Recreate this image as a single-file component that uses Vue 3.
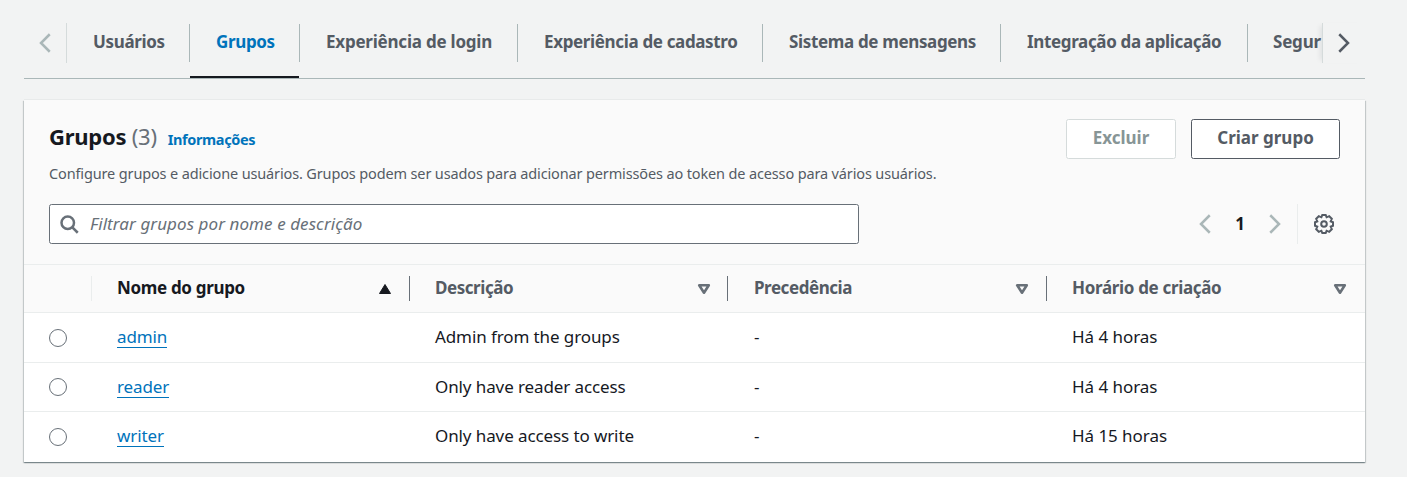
<script setup>
const tabs = [
  { label: 'Usuários', cls: 't1' },
  { label: 'Grupos', cls: 't2 active' },
  { label: 'Experiência de login', cls: 't3' },
  { label: 'Experiência de cadastro', cls: 't4' },
  { label: 'Sistema de mensagens', cls: 't5' },
  { label: 'Integração da aplicação', cls: 't6' },
  { label: 'Segur', cls: 't7' },
]
const columns = ['Nome do grupo', 'Descrição', 'Precedência', 'Horário de criação']
const rows = [
  { name: 'admin', desc: 'Admin from the groups', created: 'Há 4 horas' },
  { name: 'reader', desc: 'Only have reader access', created: 'Há 4 horas' },
  { name: 'writer', desc: 'Only have access to write', created: 'Há 15 horas' },
]
</script>

<template>
  <main class="page">
    <nav class="tabs">
      <button class="scroll left" aria-label="Anterior">
        <svg width="20" height="20" viewBox="0 0 16 16"><path d="M11 1 4 8l7 7" /></svg>
      </button>
      <div class="strip">
        <a v-for="t in tabs" :key="t.label" class="tab" :class="t.cls"><span>{{ t.label }}</span></a>
      </div>
      <button class="scroll right" aria-label="Próximo">
        <svg width="20" height="20" viewBox="0 0 16 16"><path d="m5 1 7 7-7 7" /></svg>
      </button>
    </nav>

    <section class="card">
      <header class="head">
        <div class="title-row">
          <h2>Grupos <span class="count">(3)</span></h2>
          <a class="info">Informações</a>
          <div class="actions">
            <button class="btn disabled">Excluir</button>
            <button class="btn create">Criar grupo</button>
          </div>
        </div>
        <p class="desc">Configure grupos e adicione usuários. Grupos podem ser usados para adicionar permissões ao token de acesso para vários usuários.</p>
        <div class="tools">
          <div class="search">
            <svg width="20" height="20" viewBox="0 0 16 16"><circle cx="7" cy="7" r="5" /><path d="m15 15-4.5-4.5" /></svg>
            <span>Filtrar grupos por nome e descrição</span>
          </div>
          <div class="pager">
            <svg width="20" height="20" viewBox="0 0 16 16"><path d="M11 1 4 8l7 7" /></svg>
            <b>1</b>
            <svg width="20" height="20" viewBox="0 0 16 16"><path d="m5 1 7 7-7 7" /></svg>
          </div>
          <div class="settings">
            <svg width="22" height="22" viewBox="-11 -11 22 22">
              <path d="M-1.7-9H1.7L2.6-6.7 5.2-7.8 7.8-5.2 6.7-2.6 9-1.7V1.7L6.7 2.6 7.8 5.2 5.2 7.8 2.6 6.7 1.7 9H-1.7L-2.6 6.7-5.2 7.8-7.8 5.2-6.7 2.6-9 1.7V-1.7L-6.7-2.6-7.8-5.2-5.2-7.8-2.6-6.7Z" />
              <circle r="2.8" />
            </svg>
          </div>
        </div>
      </header>

      <div class="row thead">
        <div class="pick"></div>
        <div v-for="(c, i) in columns" :key="c" class="cell" :class="['c' + i, { sorted: i === 0 }]">
          <span>{{ c }}</span>
          <svg class="sort" width="14" height="12" viewBox="0 0 14 12">
            <path v-if="i === 0" class="solid" d="M7 1.5 12.5 10.5h-11Z" />
            <path v-else d="M2.2 2.3h9.6L7 9.7Z" />
          </svg>
        </div>
      </div>
      <div v-for="r in rows" :key="r.name" class="row body">
        <div class="pick"><i class="radio"></i></div>
        <div class="cell"><a class="link">{{ r.name }}</a></div>
        <div class="cell">{{ r.desc }}</div>
        <div class="cell">-</div>
        <div class="cell time">{{ r.created }}</div>
      </div>
    </section>
  </main>
</template>

<style>
body { background: #f2f3f3; }
</style>

<style scoped>
* { box-sizing: border-box; }
.page { height: 477px; padding: 23px 42px 0 24px; overflow: hidden; background: #f2f3f3; color: #16191f; font: 17px/25px "Noto Sans", "Open Sans", sans-serif; }
button { font: inherit; background: none; border: 0; padding: 0; }
svg { display: block; flex: none; fill: none; stroke: currentColor; stroke-width: 2; overflow: visible; }
.tabs { display: flex; height: 56px; border-bottom: 1px solid #aab7b8; }
.scroll { flex: none; width: 43px; height: 40px; display: flex; align-items: center; color: #545b64; }
.scroll.left { border-right: 1px solid #d5dbdb; color: #aab7b8; padding-left: 12px; }
.scroll.right { border-left: 1px solid #d5dbdb; padding-left: 10px; box-shadow: -5px 0 5px -3px rgba(0, 28, 36, .08); }
.strip { flex: 1; display: flex; min-width: 0; }
.tab { position: relative; flex: none; height: 55px; padding: 6px 0 0 26px; color: #545b64; font-weight: 700; letter-spacing: -.35px; white-space: nowrap; }
.tab::after { content: ""; position: absolute; right: 0; top: 1px; height: 38px; border-right: 1px solid #aab7b8; }
.tab.active { color: #0073bb; }
.tab.active::before { content: ""; position: absolute; left: 0; right: 1px; bottom: 0; height: 2px; background: #16191f; }
.t1 { width: 123px; } .t2 { width: 110px; } .t3 { width: 218px; letter-spacing: -.22px; } .t4 { width: 245px; } .t5 { width: 238px; } .t6 { width: 247px; }
.t7 { padding-left: 25px; letter-spacing: -.2px; }
.t7::after { display: none; }
.card { margin-top: 21px; height: 362px; background: #fff; box-shadow: 0 1px 1px 0 rgba(0, 28, 36, .3), 1px 1px 1px 0 rgba(0, 28, 36, .15), -1px 1px 1px 0 rgba(0, 28, 36, .15), 0 -1px 0 #e8eaea; }
.head { height: 164px; padding: 19px 25px 0; background: #fafafa; }
.title-row { display: flex; height: 40px; }
h2 { margin: 2px 0 0; font-size: 22px; line-height: 30px; font-weight: 700; letter-spacing: -.25px; white-space: nowrap; }
.count { font-weight: 400; color: #687078; }
.info { margin: 8px 0 0 11px; font-size: 14.5px; line-height: 24px; font-weight: 700; letter-spacing: -.38px; color: #0073bb; }
.actions { margin-left: auto; display: flex; gap: 15px; }
.btn { width: 149px; height: 40px; border: 1px solid #545b64; border-radius: 2.5px; background: #fff; color: #545b64; font-weight: 700; padding-bottom: 3px; }
.btn.disabled { width: 110px; color: #879596; border-color: #d5dbdb; }
.desc { margin: 4px 0 0; font-size: 14.5px; line-height: 20px; letter-spacing: -.14px; color: #545b64; white-space: nowrap; }
.tools { display: flex; margin-top: 21px; height: 40px; align-items: center; }
.search { width: 810px; height: 40px; display: flex; align-items: center; gap: 11px; padding-left: 9px; background: #fff; border: 1px solid #687078; border-radius: 2.5px; color: #687078; font-style: italic; letter-spacing: .08px; }
.search span { padding-bottom: 2px; }
.pager { margin-left: auto; display: flex; align-items: center; color: #aab7b8; }
.pager b { width: 48px; text-align: center; color: #16191f; font-size: 17px; padding-bottom: 2px; }
.settings { margin-left: 13px; width: 43px; height: 40px; border-left: 1px solid #eaeded; display: flex; align-items: center; padding-left: 15px; color: #545b64; }
.row { display: grid; grid-template-columns: 68px 318px 319px 318px 318px; border-top: 1px solid #eaeded; }
.thead { height: 49px; background: #fafafa; border-bottom: 1px solid #eaeded; color: #545b64; font-weight: 700; letter-spacing: -.33px; }
.thead .cell span { padding-bottom: 2px; }
.thead .c1, .thead .c2 { letter-spacing: -.45px; }
.body { height: 50px; border-top: 0; border-bottom: 1px solid #eaeded; letter-spacing: -.1px; }
.body:nth-child(4) { height: 49px; }
.body:last-child { border-bottom: 0; }
.cell { position: relative; display: flex; align-items: center; padding: 0 18px 0 25px; white-space: nowrap; }
.body .cell { padding-bottom: 2px; }
.body:nth-child(4) .cell:nth-child(2) { padding-bottom: 0; }
.body:last-child .cell:nth-child(n + 3) { padding-bottom: 4px; }
.body .time { letter-spacing: -.05px; }
.thead .cell::before { content: ""; position: absolute; left: -1px; top: 11px; height: 25px; border-left: 1px solid #687078; }
.thead .c0::before { border-color: #eaeded; }
.thead .c2::before { left: -2px; }
.sorted { color: #16191f; }
.sort { margin-left: auto; color: #687078; stroke-width: 2.6; stroke-linejoin: round; }
.solid { fill: #16191f; stroke: #16191f; stroke-width: 1; stroke-linejoin: round; }
.pick { display: flex; align-items: center; padding-left: 25px; }
.radio { width: 18px; height: 18px; border: 1px solid #687078; border-radius: 50%; background: #fff; }
.link { color: #0073bb; border-bottom: 1px solid #0073bb; line-height: 21px; }
</style>
